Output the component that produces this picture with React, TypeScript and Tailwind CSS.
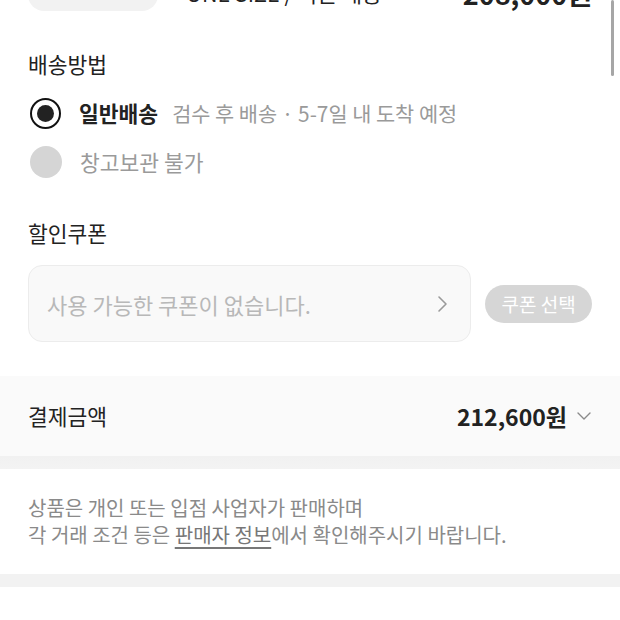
import React from "react";

const font = { fontFamily: '"Noto Sans CJK KR", "Noto Sans", sans-serif' };

export default function App() {
  return (
    <div className="relative w-[620px] h-[620px] overflow-hidden bg-white text-[#222]" style={font}>
      {/* product row, scrolled partly out of view */}
      <div className="flex h-[130px] mt-[-119px] pl-[28px] pr-[28px]">
        <div className="w-[130px] h-[130px] rounded-[16px] bg-[#f2f2f2] shrink-0" />
        <div className="flex-1 flex items-end justify-between pl-[28px]">
          <div className="mb-[5px] text-[21.5px] leading-[26px] text-[#222]">ONE SIZE / 빠른 배송</div>
          <div className="mb-[2px] text-[27px] leading-[30px] font-bold text-[#222]">208,000원</div>
        </div>
      </div>

      {/* scrollbar */}
      <div className="absolute right-[6px] top-0 w-[3px] h-[76px] rounded-full bg-[#a6a6a6]" />

      <div className="px-[28px]">
        <div className="mt-[39px] text-[21.5px] leading-[28px]">배송방법</div>

        <div className="mt-[18px] flex items-center h-[34px]">
          <div className="w-[31px] h-[31px] ml-[2px] rounded-full border-[2.5px] border-[#111] flex items-center justify-center">
            <div className="w-[17px] h-[17px] rounded-full bg-[#222]" />
          </div>
          <span className="ml-[18px] text-[21.5px] leading-[28px] font-bold">일반배송</span>
          <span className="ml-[14px] text-[20.8px] leading-[28px] text-[#9a9a9a]">검수 후 배송 · 5-7일 내 도착 예정</span>
        </div>

        <div className="mt-[15px] flex items-center h-[34px]">
          <div className="w-[32px] h-[32px] ml-[2px] rounded-full bg-[#d5d5d5]" />
          <span className="ml-[18px] text-[21.5px] leading-[28px] text-[#9a9a9a]">창고보관 불가</span>
        </div>

        <div className="mt-[40px] text-[21.5px] leading-[28px]">할인쿠폰</div>

        <div className="mt-[18px] flex items-center">
          <div className="w-[444px] h-[77px] rounded-[14px] border border-[#ececec] bg-[#f9f9f9] flex items-center justify-between pl-[18px] pr-[20px]">
            <span className="text-[22px] leading-[28px] text-[#b8b8b8]">사용 가능한 쿠폰이 없습니다.</span>
            <svg width="14" height="20" viewBox="0 0 14 20" fill="none">
              <path d="M3 3l7 7-7 7" stroke="#9a9a9a" strokeWidth="1.6" strokeLinecap="round" strokeLinejoin="round" />
            </svg>
          </div>
          <div className="ml-[14px] w-[107px] h-[38px] rounded-full bg-[#d6d6d6] flex items-center justify-center text-[19px] leading-[24px] text-white">
            쿠폰 선택
          </div>
        </div>
      </div>

      {/* payment total */}
      <div className="mt-[34px] bg-[#fafafa] h-[80px] px-[28px] flex items-center justify-between">
        <span className="text-[21.5px] leading-[28px]">결제금액</span>
        <div className="flex items-center">
          <span className="text-[23px] leading-[30px] font-bold">212,600원</span>
          <svg className="ml-[9px]" width="16" height="12" viewBox="0 0 16 12" fill="none">
            <path d="M2 3l6 6 6-6" stroke="#8a8a8a" strokeWidth="1.4" strokeLinecap="round" strokeLinejoin="round" />
          </svg>
        </div>
      </div>
      <div className="h-[13px] bg-gradient-to-b from-[#f1f1f1] to-[#f3f3f3]" />

      <div className="px-[28px] pt-[25px] text-[20px] leading-[27px] text-[#8a8a8a]">
        <div>상품은 개인 또는 입점 사업자가 판매하며</div>
        <div>
          각 거래 조건 등은 <span className="underline underline-offset-[4px] text-[#777]">판매자 정보</span>에서 확인해주시기 바랍니다.
        </div>
      </div>

      <div className="mt-[26px] h-[13px] bg-[#f2f2f2]" />
    </div>
  );
}
